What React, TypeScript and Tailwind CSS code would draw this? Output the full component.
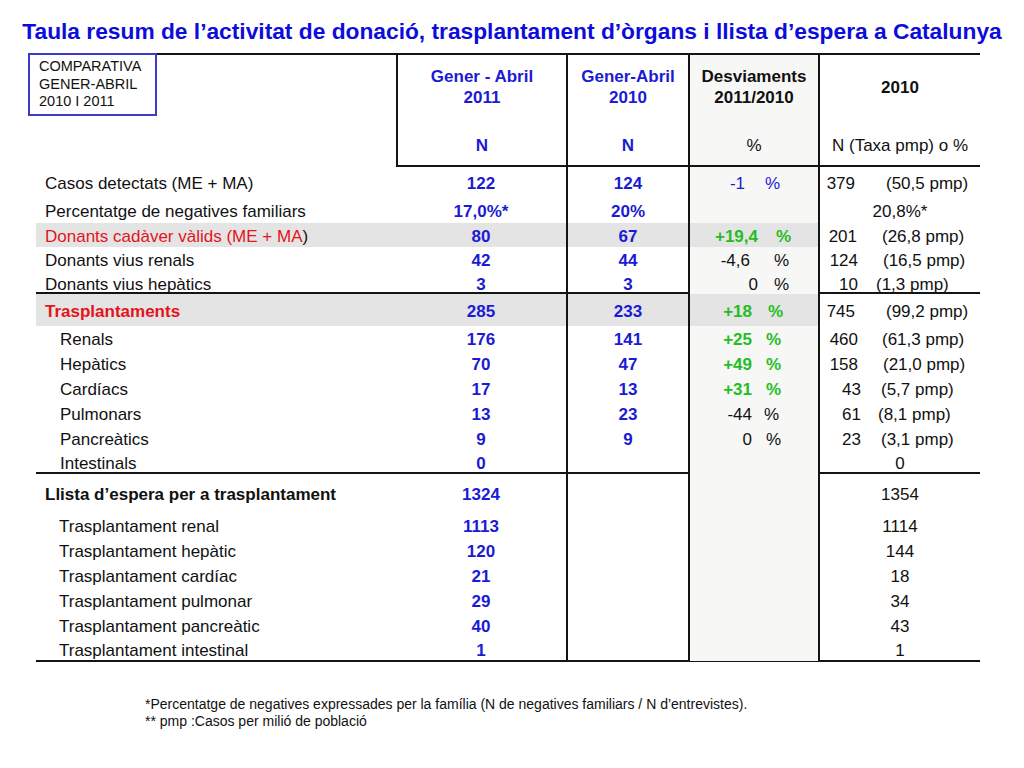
type Dev = { n: string; w: string; ml: string; cls: string };
type Y = { n?: string; w?: string; ml?: string; p?: string; c?: string };
type Row = {
  label: React.ReactNode;
  labelCls: string;
  h: string;
  a: string;
  b: string;
  dev?: Dev;
  y?: Y;
  gray?: boolean;
};

const blue = "text-[#1b1bd4] font-bold";
const green = "text-[#25bd25] font-bold";

const donors: Row[] = [
  { label: "Casos detectats (ME + MA)", labelCls: "pl-[9px]", h: "h-[30px]", a: "122", b: "124", dev: { n: "-1", w: "w-[55px]", ml: "ml-[20px]", cls: "text-[#1b1bd4]" }, y: { n: "379", w: "w-[35px]", ml: "ml-[31px]", p: "(50,5 pmp)" } },
  { label: "Percentatge de negatives familiars", labelCls: "pl-[9px]", h: "h-[26px]", a: "17,0%*", b: "20%", y: { c: "20,8%*" } },
  {
    label: (
      <>
        <span className="text-[#e3141c]">Donants cadàver vàlids (ME + MA</span>)
      </>
    ),
    labelCls: "pl-[9px]", h: "h-[24px]", a: "80", b: "67", gray: true,
    dev: { n: "+19,4", w: "w-[68px]", ml: "ml-[18px]", cls: green },
    y: { n: "201", w: "w-[37px]", ml: "ml-[25px]", p: "(26,8 pmp)" },
  },
  { label: "Donants vius renals", labelCls: "pl-[9px]", h: "h-[25px]", a: "42", b: "44", dev: { n: "-4,6", w: "w-[60px]", ml: "ml-[24px]", cls: "" }, y: { n: "124", w: "w-[38px]", ml: "ml-[25px]", p: "(16,5 pmp)" } },
  { label: "Donants vius hepàtics", labelCls: "pl-[9px]", h: "h-[20px]", a: "3", b: "3", dev: { n: "0", w: "w-[68px]", ml: "ml-[16px]", cls: "" }, y: { n: "10", w: "w-[38px]", ml: "ml-[18px]", p: "(1,3 pmp)" } },
];

const transplants: Row[] = [
  { label: "Trasplantaments", labelCls: "pl-[9px] text-[#e3141c] font-bold", h: "h-[32px]", a: "285", b: "233", gray: true, dev: { n: "+18", w: "w-[62px]", ml: "ml-[16px]", cls: green }, y: { n: "745", w: "w-[35px]", ml: "ml-[31px]", p: "(99,2 pmp)" } },
  { label: "Renals", labelCls: "pl-[24px]", h: "h-[25px]", a: "176", b: "141", dev: { n: "+25", w: "w-[62px]", ml: "ml-[14px]", cls: green }, y: { n: "460", w: "w-[38px]", ml: "ml-[24px]", p: "(61,3 pmp)" } },
  { label: "Hepàtics", labelCls: "pl-[24px]", h: "h-[25px]", a: "70", b: "47", dev: { n: "+49", w: "w-[62px]", ml: "ml-[14px]", cls: green }, y: { n: "158", w: "w-[38px]", ml: "ml-[25px]", p: "(21,0 pmp)" } },
  { label: "Cardíacs", labelCls: "pl-[24px]", h: "h-[25px]", a: "17", b: "13", dev: { n: "+31", w: "w-[62px]", ml: "ml-[14px]", cls: green }, y: { n: "43", w: "w-[41px]", ml: "ml-[20px]", p: "(5,7 pmp)" } },
  { label: "Pulmonars", labelCls: "pl-[24px]", h: "h-[25px]", a: "13", b: "23", dev: { n: "-44", w: "w-[62px]", ml: "ml-[12px]", cls: "" }, y: { n: "61", w: "w-[41px]", ml: "ml-[17px]", p: "(8,1 pmp)" } },
  { label: "Pancreàtics", labelCls: "pl-[24px]", h: "h-[25px]", a: "9", b: "9", dev: { n: "0", w: "w-[62px]", ml: "ml-[14px]", cls: "" }, y: { n: "23", w: "w-[41px]", ml: "ml-[20px]", p: "(3,1 pmp)" } },
  { label: "Intestinals", labelCls: "pl-[24px]", h: "h-[21px]", a: "0", b: "", y: { c: "0" } },
];

const waiting: Row[] = [
  { label: "Llista d’espera per a trasplantament", labelCls: "pl-[9px] font-bold", h: "h-[38px]", a: "1324", b: "", y: { c: "1354" } },
  { label: "Trasplantament renal", labelCls: "pl-[23px]", h: "h-[26px]", a: "1113", b: "", y: { c: "1114" } },
  { label: "Trasplantament hepàtic", labelCls: "pl-[23px]", h: "h-[25px]", a: "120", b: "", y: { c: "144" } },
  { label: "Trasplantament cardíac", labelCls: "pl-[23px]", h: "h-[25px]", a: "21", b: "", y: { c: "18" } },
  { label: "Trasplantament pulmonar", labelCls: "pl-[23px]", h: "h-[25px]", a: "29", b: "", y: { c: "34" } },
  { label: "Trasplantament pancreàtic", labelCls: "pl-[23px]", h: "h-[25px]", a: "40", b: "", y: { c: "43" } },
  { label: "Trasplantament intestinal", labelCls: "pl-[23px]", h: "h-[22px]", a: "1", b: "", y: { c: "1" } },
];

const cols = "grid grid-cols-[360px_170px_122px_130px_162px]";
const line = "border-l-2 border-[#141414]";

function TableRow({ r }: { r: Row }) {
  const shade = r.gray ? "bg-[#e4e4e4]" : "";
  return (
    <div className={`${cols} ${r.h}`}>
      <div className={`flex items-center pt-[3px] ${shade} ${r.labelCls}`}>{r.label}</div>
      <div className={`flex items-center justify-center pt-[3px] ${shade} ${blue}`}>{r.a}</div>
      <div className={`flex items-center justify-center pt-[3px] ${line} ${shade} ${blue}`}>{r.b}</div>
      <div className={`flex items-center pt-[3px] ${line} ${r.gray ? "bg-[#e4e4e4]" : "bg-[#f7f7f5]"}`}>
        {r.dev && (
          <>
            <span className={`text-right ${r.dev.w} ${r.dev.cls}`}>{r.dev.n}</span>
            <span className={`${r.dev.ml} ${r.dev.cls}`}>%</span>
          </>
        )}
      </div>
      <div className={`flex items-center pt-[3px] ${line}`}>
        {r.y?.c ? (
          <span className="w-full text-center">{r.y.c}</span>
        ) : r.y ? (
          <>
            <span className={`text-right ${r.y.w}`}>{r.y.n}</span>
            <span className={r.y.ml}>{r.y.p}</span>
          </>
        ) : null}
      </div>
    </div>
  );
}

const Rule = () => <div className="h-[2px] bg-[#141414]" />;

export default function App() {
  return (
    <div className="w-[1024px] h-[768px] bg-white text-[#111] font-['Liberation_Sans',Arial,sans-serif] overflow-hidden">
      <h1 className="pt-[18px] text-center text-[22.75px] leading-[26px] font-bold text-[#0c0cdc] whitespace-nowrap">
        Taula resum de l’activitat de donació, trasplantament d’òrgans i llista d’espera a Catalunya
      </h1>

      <div className="ml-[36px] mt-[9px] w-[944px] text-[17px] leading-[20px]">
        {/* header */}
        <div className={`${cols} h-[114px] border-t-2 border-[#141414]`}>
          <div>
            <div className="relative -ml-[8px] -mt-[2px] w-[129px] h-[63px] border-2 border-[#3b3bc6] bg-white pl-[9px] pt-[3px] text-[14.5px] leading-[17.5px] text-[#111]">
              COMPARATIVA
              <br />
              GENER-ABRIL
              <br />
              2010 I 2011
            </div>
          </div>
          <div className={`${line} border-b-2 flex flex-col items-center text-[#1b1bd4] font-bold leading-[21px]`}>
            <div className="h-[80px] pt-[11px] text-center">
              Gener - Abril
              <br />
              2011
            </div>
            <div>N</div>
          </div>
          <div className={`${line} border-b-2 flex flex-col items-center text-[#1b1bd4] font-bold leading-[21px]`}>
            <div className="h-[80px] pt-[11px] text-center">
              Gener-Abril
              <br />
              2010
            </div>
            <div>N</div>
          </div>
          <div className={`${line} border-b-2 bg-[#f7f7f5] flex flex-col items-center leading-[21px]`}>
            <div className="h-[80px] pt-[11px] text-center font-bold">
              Desviaments
              <br />
              2011/2010
            </div>
            <div>%</div>
          </div>
          <div className={`${line} border-b-2 flex flex-col items-center leading-[21px]`}>
            <div className="h-[80px] pt-[22px] text-center font-bold">2010</div>
            <div>N (Taxa pmp) o %</div>
          </div>
        </div>

        {donors.map((r, i) => (
          <TableRow key={i} r={r} />
        ))}
        <Rule />
        {transplants.map((r, i) => (
          <TableRow key={i} r={r} />
        ))}
        <Rule />
        {waiting.map((r, i) => (
          <TableRow key={i} r={r} />
        ))}
        <Rule />
      </div>

      <div className="ml-[145px] mt-[34px] text-[14px] leading-[17px] text-[#111]">
        <div>*Percentatge de negatives expressades per la família (N de negatives familiars / N d’entrevistes).</div>
        <div>** pmp :Casos per milió de població</div>
      </div>
    </div>
  );
}
